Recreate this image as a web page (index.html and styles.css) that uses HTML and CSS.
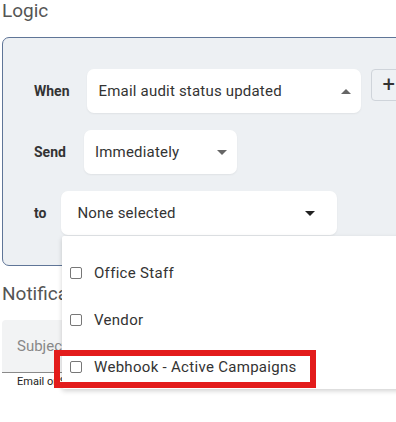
FILE: index.html
```html
<!DOCTYPE html>
<html lang="en">
<head>
  <meta charset="UTF-8">
  <meta name="viewport" content="width=device-width, initial-scale=1.0">
  <title>Notification Logic</title>
  <link rel="stylesheet" href="styles.css">
</head>
<body>
  <h2 class="section-title">Logic</h2>

  <div class="logic-panel">
    <div class="logic-row row-when">
      <label class="row-label">When</label>
      <div class="select select-when">
        <span>Email audit status updated</span>
        <span class="caret caret-up"></span>
      </div>
      <button class="add-btn">+</button>
    </div>

    <div class="logic-row row-send">
      <label class="row-label">Send</label>
      <div class="select select-send">
        <span>Immediately</span>
        <span class="caret"></span>
      </div>
    </div>

    <div class="logic-row row-to">
      <label class="row-label">to</label>
      <div class="select select-to">
        <span>None selected</span>
        <span class="caret caret-dark"></span>
      </div>
    </div>
  </div>

  <h2 class="section-title notif-title">Notifications</h2>
  <div class="subject-field">
    <span class="placeholder">Subject</span>
  </div>
  <div class="helper-text">Email or SMS subject line</div>

  <!-- recipients dropdown, open -->
  <ul class="dropdown-menu">
    <li><span class="checkbox"></span>Office Staff</li>
    <li><span class="checkbox"></span>Vendor</li>
    <li><span class="checkbox"></span>Webhook - Active Campaigns</li>
  </ul>
  <div class="highlight-box"></div>
</body>
</html>
```

FILE: styles.css
```css
body {
  font-family: Roboto, "Liberation Sans", Arial, sans-serif;
  color: #333;
  margin: 0;
  padding: 0 0 0 2px;
  width: 396px;
  height: 422px;
  overflow: hidden;
  position: relative;
  background: #fff;
}
.section-title {
  font-size: 19px;
  font-weight: 400;
  color: #555;
  margin: 0;
  line-height: 22px;
  height: 20px;
}
.logic-panel {
  margin-top: 17px;
  width: 430px;
  box-sizing: border-box;
  background-color: #edf0f3;
  border: 1px solid #5f7597;
  border-radius: 7px;
  padding: 31px 0 30px 31px;
  display: flex;
  flex-direction: column;
  gap: 17px;
}
.logic-row {
  display: flex;
  align-items: center;
  gap: 17px;
}
.row-send {
  gap: 18px;
}
.row-to {
  gap: 15px;
}
.row-label {
  font-weight: 700;
  font-size: 14px;
  color: #333;
}
.select {
  background: #fff;
  border-radius: 7px;
  height: 44px;
  box-sizing: border-box;
  display: flex;
  align-items: center;
  justify-content: space-between;
  box-shadow: 0 1px 2px rgba(0, 0, 0, 0.06);
  font-size: 15px;
  color: #333;
  letter-spacing: 0.2px;
}
.select-when {
  width: 274px;
  padding: 0 10px 0 12px;
}
.select-send {
  width: 153px;
  padding: 0 10px 0 11px;
}
.select-to {
  width: 276px;
  padding: 0 22px 0 16px;
}
.caret {
  width: 0;
  height: 0;
  border-left: 5px solid transparent;
  border-right: 5px solid transparent;
  border-top: 5px solid #666;
}
.caret-up {
  border-top: none;
  border-bottom: 5px solid #666;
}
.caret-dark {
  border-top-color: #222;
}
.add-btn {
  margin-left: -7px;
  align-self: flex-start;
  height: 32px;
  width: 40px;
  border: 1px solid #cfd4da;
  border-radius: 4px;
  background: #eef1f4;
  font-size: 22px;
  color: #333;
  padding: 0 0 2px 11px;
  text-align: left;
  font-family: Roboto, sans-serif;
}
.notif-title {
  margin-top: 17px;
}
.subject-field {
  margin-top: 17px;
  width: 420px;
  height: 53px;
  box-sizing: border-box;
  background: #f2f3f4;
  border-radius: 4px 4px 0 0;
  border-bottom: 1px solid #8a8a8a;
  display: flex;
  align-items: center;
  padding-left: 15px;
}
.placeholder {
  font-size: 15px;
  color: #888;
}
.helper-text {
  font-size: 11px;
  color: #222;
  padding-left: 15px;
  margin-top: 2px;
}
.dropdown-menu {
  position: absolute;
  left: 62px;
  top: 236px;
  width: 360px;
  height: 153px;
  box-sizing: border-box;
  margin: 0;
  padding: 25px 0 0 8px;
  list-style: none;
  background: #fff;
  box-shadow: 0 2px 5px rgba(0, 0, 0, 0.18);
  border-radius: 2px;
}
.dropdown-menu li {
  display: flex;
  align-items: center;
  height: 24px;
  margin-bottom: 23px;
  font-size: 15px;
  color: #333;
  letter-spacing: 0.3px;
}
.checkbox {
  width: 10px;
  height: 10px;
  border: 1px solid #777;
  border-radius: 2px;
  margin-right: 12px;
}
.highlight-box {
  position: absolute;
  left: 54px;
  top: 350px;
  width: 262px;
  height: 38px;
  box-sizing: border-box;
  border: 6px solid #e31b1b;
}
```
